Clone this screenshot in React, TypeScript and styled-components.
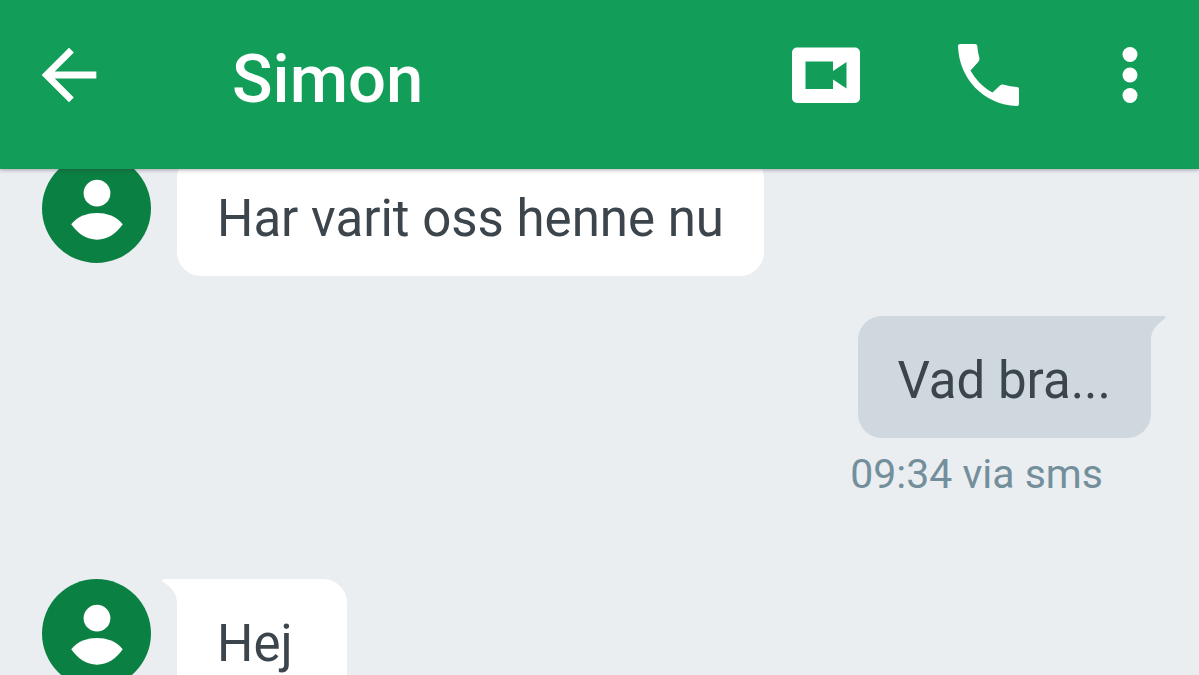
import React from "react";
import styled, { createGlobalStyle } from "styled-components";

const GlobalStyle = createGlobalStyle`
  * { box-sizing: border-box; }
  body { margin: 0; background: #eaeef1; font-family: Roboto, "Liberation Sans", sans-serif; }
`;

const Screen = styled.div`
  display: flex;
  flex-direction: column;
  height: 100vh;
  overflow: hidden;
`;

const AppBar = styled.header`
  position: relative;
  z-index: 1;
  flex: none;
  display: flex;
  align-items: center;
  height: 169px;
  padding: 0 28px 19px;
  background: #129e59;
  color: #fff;
  box-shadow: 0 1px 4px rgba(60, 40, 60, 0.4);
`;

const IconButton = styled.button`
  display: block;
  flex: none;
  width: 82px;
  height: 82px;
  padding: 0;
  border: 0;
  background: none;
  color: inherit;
  cursor: pointer;

  svg {
    display: block;
    width: 100%;
    height: 100%;
    fill: currentColor;
  }
`;

const Title = styled.h1`
  flex: 1;
  margin: 0;
  padding: 8px 0 0 122px;
  font-size: 67px;
  line-height: 80px;
  font-weight: 500;
`;

const Actions = styled.div`
  display: flex;
  gap: 80px;

  button:last-child {
    margin-left: -20px;
  }
`;

const Thread = styled.main`
  flex: 1;
  min-height: 0;
  overflow: hidden;
`;

/* The thread is scrolled so the first message slides under the app bar. */
const Messages = styled.ol`
  display: flex;
  flex-direction: column;
  gap: 40px;
  margin: -15px 0 0;
  padding: 0 48px 0 42px;
  list-style: none;
`;

const Message = styled.li<{ $outgoing?: boolean }>`
  display: flex;
  flex-direction: ${(p) => (p.$outgoing ? "column" : "row")};
  align-items: ${(p) => (p.$outgoing ? "flex-end" : "flex-start")};
  gap: ${(p) => (p.$outgoing ? "12px" : "26px")};
  padding-bottom: ${(p) => (p.$outgoing ? "41px" : "0")};
`;

const Avatar = styled.svg`
  flex: none;
  display: block;
  width: 109px;
  height: 109px;
`;

const Bubble = styled.div<{ $outgoing?: boolean; $tail?: boolean }>`
  position: relative;
  min-width: 170px;
  padding: 35px 40px 27px;
  border-radius: 24px;
  border-top-left-radius: ${(p) => (p.$tail && !p.$outgoing ? "0" : "24px")};
  border-top-right-radius: ${(p) => (p.$tail && p.$outgoing ? "0" : "24px")};
  background: ${(p) => (p.$outgoing ? "#cfd8df" : "#fff")};
  color: #3c454c;
  font-size: 51px;
  line-height: 60px;
`;

const Tail = styled.svg<{ $outgoing?: boolean }>`
  position: absolute;
  top: 0;
  ${(p) => (p.$outgoing ? "left: 100%;" : "right: 100%; transform: scaleX(-1);")}
  width: 15px;
  height: 24px;
  fill: ${(p) => (p.$outgoing ? "#cfd8df" : "#fff")};
`;

const Meta = styled.div`
  margin-right: 48px;
  color: #748f9c;
  font-size: 41px;
  line-height: 48px;
`;

const Person = () => (
  <Avatar viewBox="0 0 110 110" aria-hidden="true">
    <circle cx="55" cy="55" r="55" fill="#0b8043" />
    <circle cx="55.500" cy="39.500" r="13.500" fill="#fff" />
    <path
      fill="#fff"
      d="M29.500 71C36 62.500 46 59.500 55.500 59.500S75 62.500 81.500 71C75 80.500 66 86.500 55.500 86.500S36 80.500 29.500 71z"
    />
  </Avatar>
);

const BubbleTail = ({ outgoing }: { outgoing?: boolean }) => (
  <Tail $outgoing={outgoing} viewBox="0 0 15 24" aria-hidden="true">
    <path d="M0 0H13.500Q15.500 1.500 13.500 3C6 8 0 14 0 24z" />
  </Tail>
);

export default function App() {
  return (
    <>
      <GlobalStyle />
      <Screen>
        <AppBar>
          <IconButton type="button" aria-label="Tillbaka">
            <svg viewBox="0 0 24 24">
              <path d="M20 11H7.830l5.590-5.590L12 4l-8 8 8 8 1.410-1.410L7.830 13H20v-2z" />
            </svg>
          </IconButton>
          <Title>Simon</Title>
          <Actions>
            <IconButton type="button" aria-label="Videosamtal">
              <svg viewBox="0 0 82 82">
                <path
                  fillRule="evenodd"
                  d="M12 13.500H70a5 5 0 0 1 5 5V64a5 5 0 0 1-5 5H12a5 5 0 0 1-5-5V18.500a5 5 0 0 1 5-5zM20.500 27.500V55H48V45.500L61.500 54.500V28L48 37V27.500z"
                />
              </svg>
            </IconButton>
            <IconButton type="button" aria-label="Ring">
              <svg viewBox="0 0 82 82">
                <path d="M13 10H28Q30 10 30.300 12Q30.700 18 32.300 23.500Q33 26 31.200 28L23.500 36.500C29 46 36 53.500 45.500 58.500L53 51.500Q54.500 50 57 50.700Q63 52.500 70 53Q72 53.200 72 55V70Q72 72 70 72C37 71 12 45 11 12Q11 10 13 10z" />
              </svg>
            </IconButton>
            <IconButton type="button" aria-label="Fler alternativ">
              <svg viewBox="0 0 82 82">
                <circle cx="41" cy="20.500" r="7.500" />
                <circle cx="41" cy="41" r="7.500" />
                <circle cx="41" cy="61.500" r="7.500" />
              </svg>
            </IconButton>
          </Actions>
        </AppBar>
        <Thread>
          <Messages>
            <Message>
              <Person />
              <Bubble>Har varit oss henne nu</Bubble>
            </Message>
            <Message $outgoing>
              <Bubble $outgoing $tail>
                Vad bra...
                <BubbleTail outgoing />
              </Bubble>
              <Meta>09:34 via sms</Meta>
            </Message>
            <Message>
              <Person />
              <Bubble $tail>
                Hej
                <BubbleTail />
              </Bubble>
            </Message>
          </Messages>
        </Thread>
      </Screen>
    </>
  );
}
